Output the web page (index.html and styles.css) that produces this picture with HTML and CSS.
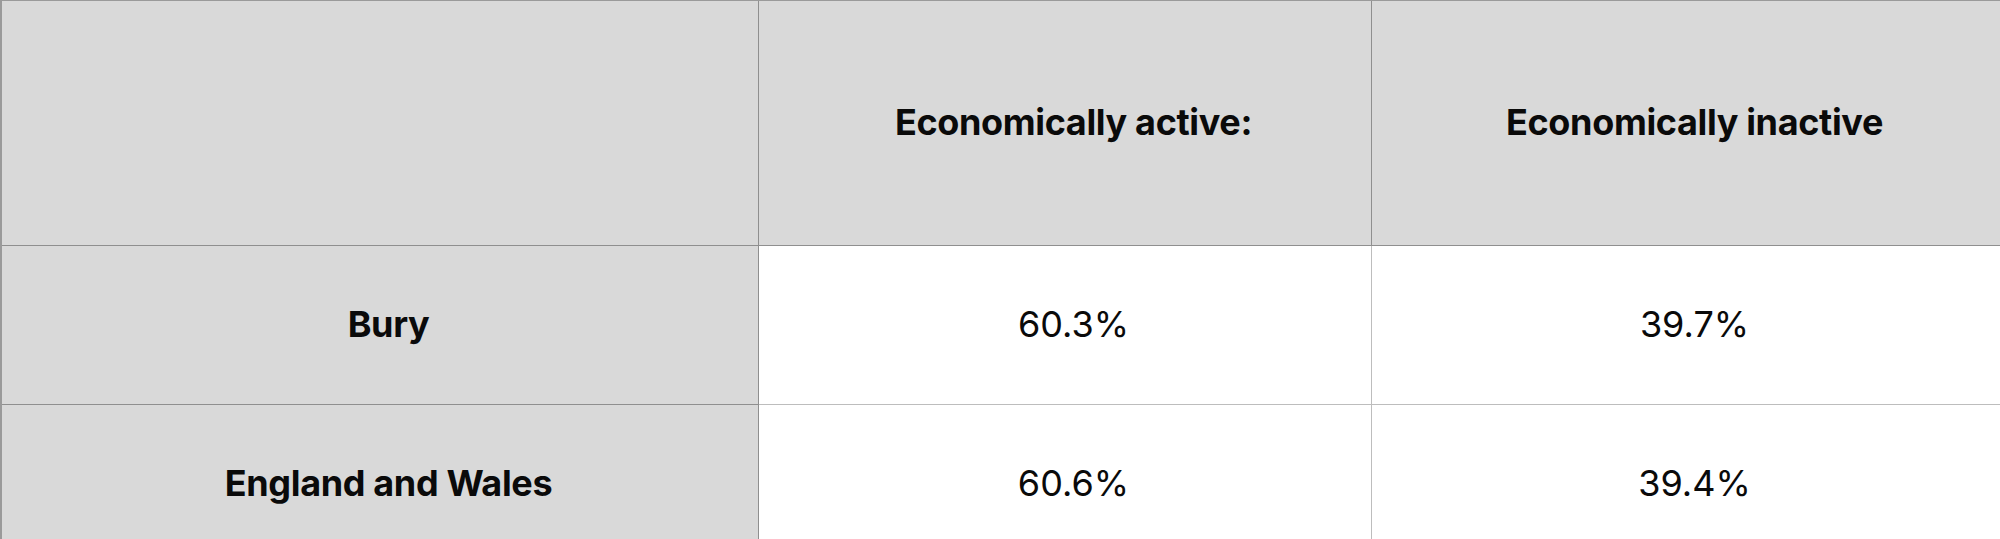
FILE: index.html
```html
<!DOCTYPE html>
<html>
<head>
<meta charset="utf-8">
<link rel="stylesheet" href="styles.css">
</head>
<body>
<div class="table">
  <div class="cell head"></div>
  <div class="cell head"><span class="label">Economically active:</span></div>
  <div class="cell head last"><span class="label">Economically inactive</span></div>
  <div class="cell row-head"><span class="label">Bury</span></div>
  <div class="cell value">60.3%</div>
  <div class="cell value last">39.7%</div>
  <div class="cell row-head"><span class="label">England and Wales</span></div>
  <div class="cell value">60.6%</div>
  <div class="cell value last">39.4%</div>
</div>
</body>
</html>
```
FILE: styles.css
```css
html, body {
  margin: 0;
  padding: 0;
  background: #ffffff;
  overflow: hidden;
}
.table {
  display: grid;
  grid-template-columns: 757px 613px 630px;
  grid-template-rows: 245px 159px 159px;
  width: 2002px;
  box-sizing: border-box;
  border-top: 1px solid #9a9a9a;
  border-left: 2px solid #9a9a9a;
  font-family: "Inter", "Liberation Sans", sans-serif;
  color: #0a0a0a;
}
.cell {
  display: flex;
  align-items: center;
  justify-content: center;
  box-sizing: border-box;
  padding: 0 0 3px 17px;
  border-right: 1px solid #8f8f8f;
  border-bottom: 1px solid #8f8f8f;
}
.cell.last {
  border-right: 2px solid #b5b5b5;
}
.head, .row-head {
  background: #d9d9d9;
}
.label {
  font-weight: 700;
  font-size: 36px;
  letter-spacing: -0.35px;
}
.value {
  background: #ffffff;
  font-size: 36px;
  font-weight: 400;
  border-right-color: #bdbdbd;
  border-bottom-color: #bdbdbd;
}
```
